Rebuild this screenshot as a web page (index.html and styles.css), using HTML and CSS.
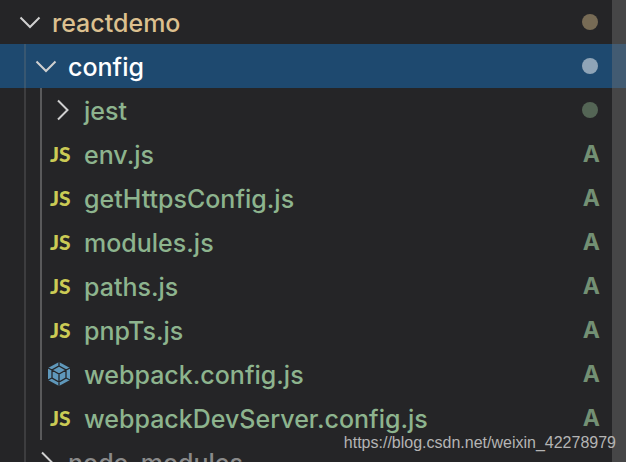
FILE: index.html
```html
<!DOCTYPE html>
<html lang="en">
<head>
<meta charset="UTF-8">
<title>Explorer</title>
<link rel="stylesheet" href="styles.css">
</head>
<body>
<svg width="0" height="0" class="defs">
  <symbol id="down" viewBox="0 0 28 28"><path d="M4.500 9.500 14 19l9.500-9.500"/></symbol>
  <symbol id="right" viewBox="0 0 28 28"><path d="M10 4.500 19.500 14 10 23.500"/></symbol>
  <symbol id="webpack" viewBox="0 0 24 26">
    <path class="cube" d="M12 1 23 7v12l-11 6L1 19V7z"/>
    <path class="edge" d="M12 1v4M1 7l4 2M23 7l-4 2M1 19l4-2M23 19l-4-2M12 25v-4M12 5l7 4v8l-7 4-7-4v-8zM5 9l7 4 7-4M12 13v8"/>
  </symbol>
</svg>

<main class="explorer">
  <nav class="tree" aria-label="Files">
    <button class="row modified">
      <svg class="twistie"><use href="#down"/></svg>
      <span class="name">reactdemo</span><span class="dot"></span>
    </button>
    <button class="row selected">
      <i class="guide"></i>
      <svg class="twistie"><use href="#down"/></svg>
      <span class="name">config</span><span class="dot"></span>
    </button>
    <button class="row added">
      <i class="guide"></i><i class="guide active"></i>
      <svg class="twistie"><use href="#right"/></svg>
      <span class="name">jest</span><span class="dot"></span>
    </button>
    <button class="row added">
      <i class="guide"></i><i class="guide active"></i>
      <span class="js">JS</span>
      <span class="name">env.js</span><span class="status">A</span>
    </button>
    <button class="row added">
      <i class="guide"></i><i class="guide active"></i>
      <span class="js">JS</span>
      <span class="name">getHttpsConfig.js</span><span class="status">A</span>
    </button>
    <button class="row added">
      <i class="guide"></i><i class="guide active"></i>
      <span class="js">JS</span>
      <span class="name">modules.js</span><span class="status">A</span>
    </button>
    <button class="row added">
      <i class="guide"></i><i class="guide active"></i>
      <span class="js">JS</span>
      <span class="name">paths.js</span><span class="status">A</span>
    </button>
    <button class="row added">
      <i class="guide"></i><i class="guide active"></i>
      <span class="js">JS</span>
      <span class="name">pnpTs.js</span><span class="status">A</span>
    </button>
    <button class="row added">
      <i class="guide"></i><i class="guide active"></i>
      <svg class="webpack"><use href="#webpack"/></svg>
      <span class="name">webpack.config.js</span><span class="status">A</span>
    </button>
    <button class="row added">
      <i class="guide"></i><i class="guide active"></i>
      <span class="js">JS</span>
      <span class="name">webpackDevServer.config.js</span><span class="status">A</span>
    </button>
    <button class="row ignored">
      <i class="guide"></i>
      <svg class="twistie"><use href="#right"/></svg>
      <span class="name">node_modules</span>
    </button>
  </nav>
  <div class="scrollbar"></div>
  <p class="watermark">https://blog.csdn.net/weixin_42278979</p>
</main>
</body>
</html>
```
FILE: styles.css
```css
:root{
  --bg: #252527;
  --selected: #1e496f;
  --added: #8db48e;
  --modified: #dcc08f;
  --ignored: #8a8a8a;
  --js: #cbcb55;
  --webpack: #5f98bb;
}
*{ box-sizing: border-box; }
body{ margin: 0; background: var(--bg); }
.defs{ position: absolute; }

.explorer{ position: relative; height: 100vh; overflow: hidden; }
.tree{ display: flex; flex-direction: column; }

.row{
  display: flex; align-items: center; flex-shrink: 0;
  width: 100%; height: 44px; padding: 0 26px 0 16px;
  border: 0; background: none; text-align: left; cursor: pointer;
  font-family: Inter, "Liberation Sans", sans-serif; font-size: 25px; font-weight: 500; line-height: 32px;
}
.row.selected{ background: var(--selected); color: #fff; }
.row.added{ color: var(--added); }
.row.modified{ color: var(--modified); }
.row.ignored{ color: var(--ignored); }

.guide{
  align-self: stretch; width: 8px; margin-left: 8px;
  border-left: 2px solid rgba(120,120,120,0.3);
}
.guide.active{ border-color: #5a5a5b; }

.twistie{
  width: 28px; height: 28px; margin-right: 8px; flex-shrink: 0;
  fill: none; stroke: #d0d0d0; stroke-width: 2;
}
.js{
  width: 36px; padding-left: 2px; flex-shrink: 0; color: var(--js);
  font-family: Lato, "Open Sans", sans-serif; font-size: 21px; font-weight: 900;
}
.webpack{ width: 24px; height: 26px; margin: 0 13px 0 -1px; flex-shrink: 0; }
.cube{ fill: var(--webpack); }
.edge{ fill: none; stroke: var(--bg); stroke-width: 1.3; }

.name{ flex: 1; padding-top: 2px; white-space: nowrap; }
.dot{
  width: 16px; height: 16px; margin-right: 2px;
  border-radius: 50%; background: currentColor; opacity: 0.45;
}
.selected .dot{ opacity: 0.5; }
.status{ font-size: 23px; font-weight: 700; opacity: 0.75; }

.scrollbar{
  position: absolute; top: 0; right: 0; bottom: 0; width: 14px;
  background: rgba(121,121,121,0.4);
}
.watermark{
  position: absolute; right: 10px; bottom: 8px; margin: 0;
  font: 16px/22px "Liberation Sans", Arial, sans-serif; color: #b4b4b4;
}
```
